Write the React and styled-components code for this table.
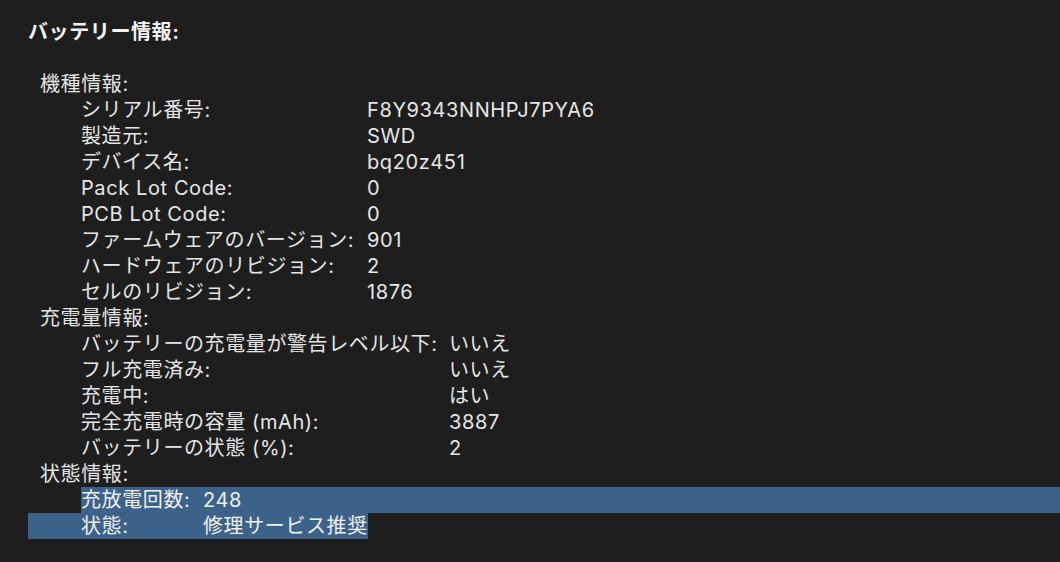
import React from "react";
import styled, { createGlobalStyle } from "styled-components";

const GlobalStyle = createGlobalStyle`
  html, body {
    margin: 0;
    padding: 0;
    background: #1e1e1e;
  }
`;

const groups = [
  {
    title: "機種情報:",
    labelWidth: 286,
    rows: [
      ["シリアル番号:", "F8Y9343NNHPJ7PYA6"],
      ["製造元:", "SWD"],
      ["デバイス名:", "bq20z451"],
      ["Pack Lot Code:", "0"],
      ["PCB Lot Code:", "0"],
      ["ファームウェアのバージョン:", "901"],
      ["ハードウェアのリビジョン:", "2"],
      ["セルのリビジョン:", "1876"],
    ],
  },
  {
    title: "充電量情報:",
    labelWidth: 368,
    rows: [
      ["バッテリーの充電量が警告レベル以下:", "いいえ"],
      ["フル充電済み:", "いいえ"],
      ["充電中:", "はい"],
      ["完全充電時の容量 (mAh):", "3887"],
      ["バッテリーの状態 (%):", "2"],
    ],
  },
  {
    title: "状態情報:",
    labelWidth: 122,
    // 選択範囲: 1行目は途中から右端まで、2行目は左端から文末まで
    rows: [
      ["充放電回数:", "248", "tail"],
      ["状態:", "修理サービス推奨", "head"],
    ],
  },
];

const App = () => {
  return (
    <>
      <GlobalStyle />
      <Page>
        <Title>バッテリー情報:</Title>
        <Spacer />
        {groups.map((g) => (
          <Group key={g.title}>
            <GroupTitle>{g.title}</GroupTitle>
            <Table $labelWidth={g.labelWidth}>
              {g.rows.map(([label, value, sel]) => (
                <React.Fragment key={label}>
                  <Indent $sel={sel === "head"} />
                  <Cell $sel={!!sel}>{label}</Cell>
                  <Cell $sel={!!sel}>{value}</Cell>
                  <Filler $sel={sel === "tail"} />
                </React.Fragment>
              ))}
            </Table>
          </Group>
        ))}
      </Page>
    </>
  );
};

export default App;

const Page = styled.div`
  min-height: 562px;
  box-sizing: border-box;
  padding: 19px 0 0 28px;
  background: #1e1e1e;
  color: #e6e6e6;
  font-family: Inter, "Noto Sans CJK JP", sans-serif;
  font-size: 20px;
  letter-spacing: 0.6px;
  line-height: 26px;
`;

const Title = styled.div`
  font-weight: 700;
  color: #f2f2f2;
`;

const Spacer = styled.div`
  height: 26px;
`;

const Group = styled.div`
  display: flex;
  flex-direction: column;
`;

const GroupTitle = styled.div`
  padding-left: 12px;
`;

const Table = styled.div`
  display: grid;
  grid-template-columns: 53px ${(p) => p.$labelWidth}px auto 1fr;
`;

const Indent = styled.div`
  background: ${(p) => (p.$sel ? "#3d6289" : "transparent")};
`;

const Cell = styled.div`
  white-space: nowrap;
  background: ${(p) => (p.$sel ? "#3d6289" : "transparent")};
  color: ${(p) => (p.$sel ? "#f0f0f0" : "inherit")};
`;

const Filler = styled.div`
  background: ${(p) => (p.$sel ? "#3d6289" : "transparent")};
`;
